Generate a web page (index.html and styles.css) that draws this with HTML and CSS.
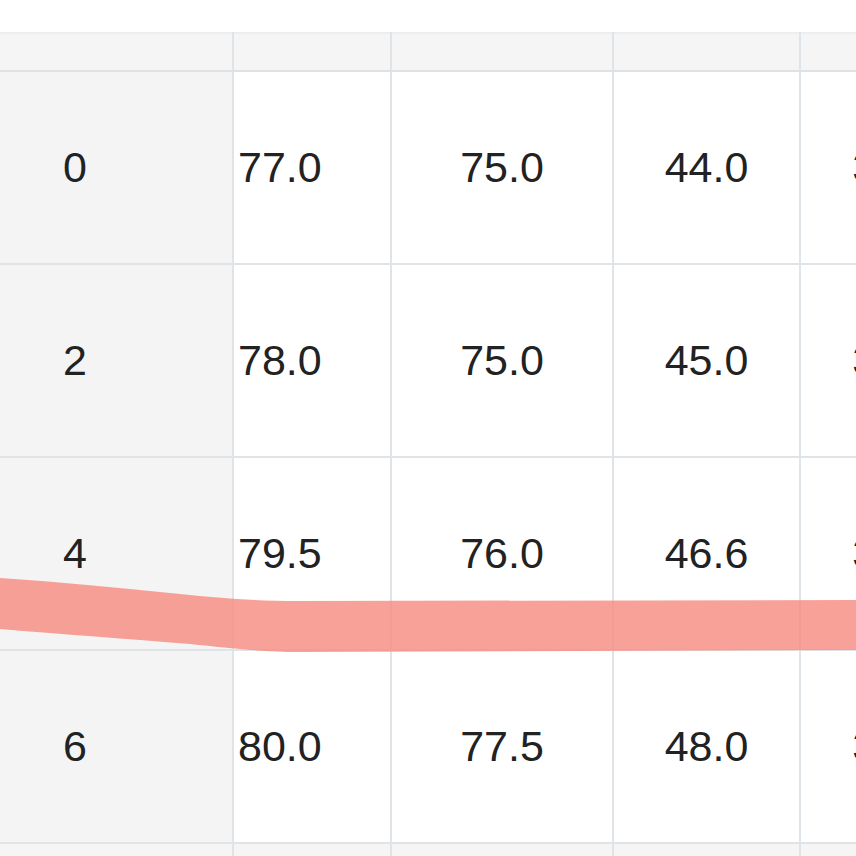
FILE: index.html
```html
<!DOCTYPE html>
<html>
<head>
<meta charset="utf-8">
<link rel="stylesheet" href="styles.css">
</head>
<body>
<div class="page">
  <table class="grid">
    <colgroup>
      <col class="c0"><col class="c1"><col class="c2"><col class="c3"><col class="c4">
    </colgroup>
    <thead>
      <tr class="head"><th class="idx"></th><th></th><th></th><th></th><th></th></tr>
    </thead>
    <tbody>
      <tr><td class="idx">0</td><td class="left">77.0</td><td>75.0</td><td>44.0</td><td>38.0</td></tr>
      <tr><td class="idx">2</td><td class="left">78.0</td><td>75.0</td><td>45.0</td><td>38.5</td></tr>
      <tr><td class="idx">4</td><td class="left">79.5</td><td>76.0</td><td>46.6</td><td>39.0</td></tr>
      <tr><td class="idx">6</td><td class="left">80.0</td><td>77.5</td><td>48.0</td><td>39.5</td></tr>
      <tr class="tail"><td class="idx"></td><td></td><td></td><td></td><td></td></tr>
    </tbody>
  </table>
  <svg class="marker" width="856" height="856" viewBox="0 0 856 856">
    <path d="M0 578 C 60 582, 120 588, 180 594 C 220 598, 250 601, 300 601 L 856 600 L 856 650 L 300 652 C 260 652, 230 648, 190 644 C 130 639, 60 634, 0 629 Z" />
  </svg>
</div>
</body>
</html>
```
FILE: styles.css
```css
html, body {
  margin: 0;
  padding: 0;
  background: #ffffff;
  overflow: hidden;
  width: 856px;
  height: 856px;
}
.page {
  position: relative;
  width: 856px;
  height: 856px;
  overflow: hidden;
  padding-top: 32px;
  box-sizing: border-box;
}
.grid {
  border-collapse: collapse;
  table-layout: fixed;
  width: 988px;
  font-family: "Liberation Sans", Arial, sans-serif;
  font-size: 43px;
  color: #222222;
}
.c0 { width: 233px; }
.c1 { width: 158px; }
.c2 { width: 222px; }
.c3 { width: 187px; }
.c4 { width: 188px; }
.grid th, .grid td {
  border: 2px solid #dfe4e8;
  padding: 0;
  text-align: center;
  vertical-align: middle;
  font-weight: normal;
}
.grid tr:first-child th { border-top: 2px solid #eceeef; }
.grid th:first-child, .grid td:first-child { border-left: none; }
.head th {
  height: 36px;
  background: #f5f5f6;
  border-bottom: 2px solid #dde2e5;
}
.grid tbody tr { height: 193px; }
.grid tbody tr.tail { height: 40px; }
.grid td { background: #ffffff; }
.grid td.idx {
  background: #f4f4f5;
  padding-right: 82px;
}
.grid td.left {
  text-align: left;
  padding-left: 4px;
}
.grid tr.tail td { background: #f5f5f6; }
.marker {
  position: absolute;
  left: 0;
  top: 0;
  pointer-events: none;
}
.marker path {
  fill: rgb(247, 140, 130);
  opacity: 0.82;
}
```
